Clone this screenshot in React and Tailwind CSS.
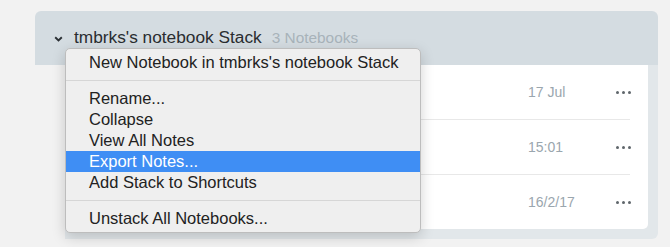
import React from 'react';

const rows = [
    { date: '17 Jul' },
    { date: '15:01' },
    { date: '16/2/17' },
];

const menu = [
    ['New Notebook in tmbrks\'s notebook Stack'],
    ['Rename...', 'Collapse', 'View All Notes', 'Export Notes...', 'Add Stack to Shortcuts'],
    ['Unstack All Notebooks...'],
];

const Dots = () => (
    <div className="flex items-center gap-[3px]">
        <span className="w-[3px] h-[3px] rounded-full bg-[#5f666b]" />
        <span className="w-[3px] h-[3px] rounded-full bg-[#5f666b]" />
        <span className="w-[3px] h-[3px] rounded-full bg-[#5f666b]" />
    </div>
);

export default function App() {
    return (
        <div
            className="relative w-[670px] h-[247px] bg-[#f2f2f2] pt-[11px] pl-[35px] overflow-hidden"
            style={{ fontFamily: '"Helvetica Neue", "Liberation Sans", Arial, sans-serif' }}
        >
            <div className="w-[623px]">
                {/* stack header */}
                <div className="h-[54px] bg-[#d4dce1] rounded-t-[6px] flex items-center pl-[19px]">
                    <svg width="9" height="6" viewBox="0 0 9 6" className="mr-[11px] mt-[2px]">
                        <path d="M1.2 1.2 L4.5 4.4 L7.8 1.2" fill="none" stroke="#2b3034" strokeWidth="1.9" />
                    </svg>
                    <span className="text-[17.3px] text-[#2a2d30]">tmbrks's notebook Stack</span>
                    <span className="ml-[10px] text-[15.4px] text-[#a8b3ba]">3 Notebooks</span>
                </div>
                {/* notebook list */}
                <div className="ml-[30px] bg-[#e2e7ea] pr-[10px] pb-[10px] rounded-br-[6px]">
                    <div className="bg-white rounded-b-[5px] flex flex-col">
                        {rows.map((r, i) => (
                            <div key={r.date}>
                                {i > 0 && <div className="h-px bg-[#e8e8e8] mr-[18px]" />}
                                <div className="h-[54px] flex items-center justify-end pr-[17px]">
                                    <span className="text-[14px] text-[#9aa6ae] w-[88px]">{r.date}</span>
                                    <Dots />
                                </div>
                            </div>
                        ))}
                    </div>
                </div>
            </div>

            {/* context menu */}
            <div className="absolute left-[65px] top-[48px] w-[356px] bg-[#efefef] border border-[#bdbdbd] rounded-[5px] py-[3px] shadow-[0_4px_14px_rgba(0,0,0,0.18)]">
                {menu.map((group, gi) => (
                    <div key={gi}>
                        {gi > 0 && <div className="h-px bg-[#d6d6d6] my-[7px]" />}
                        {group.map((item) => (
                            <div
                                key={item}
                                className={`h-[21px] flex items-center pl-[23px] text-[16.5px] ${
                                    item === 'Export Notes...' ? 'bg-[#3f8ef4] text-white' : 'text-[#222]'
                                }`}
                            >
                                {item}
                            </div>
                        ))}
                    </div>
                ))}
            </div>
        </div>
    );
}
